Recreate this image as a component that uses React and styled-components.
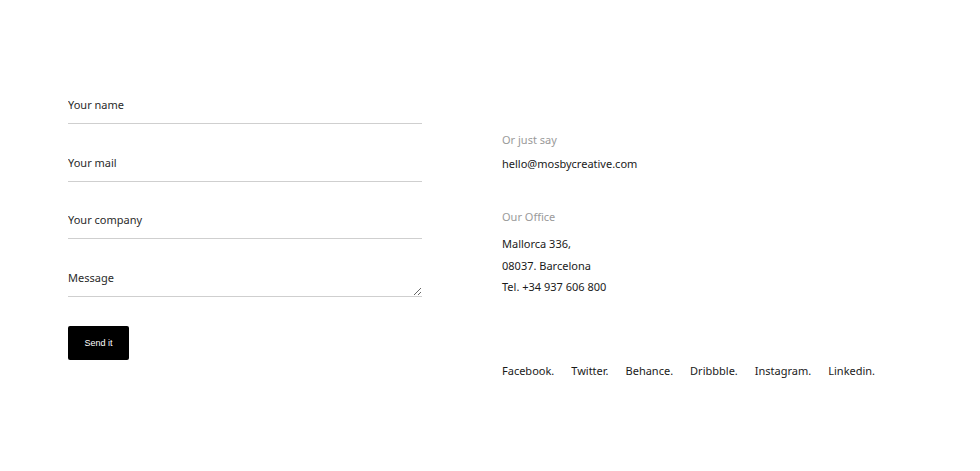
import React from "react";
import styled, { createGlobalStyle } from "styled-components";

const GlobalStyle = createGlobalStyle`
  body {
    margin: 0;
    background: #fff;
    font-family: "Noto Sans", "Open Sans", sans-serif;
    color: #1a1a1a;
  }
`;

const Page = styled.div`
  display: flex;
  gap: 80px;
  padding: 86px 0 0 68px;
  height: 471px;
  box-sizing: border-box;
`;

const Form = styled.form`
  width: 354px;
  display: flex;
  flex-direction: column;
  gap: 19.5px;
`;

const Input = styled.input`
  height: 38px;
  box-sizing: border-box;
  border: none;
  border-bottom: 1px solid #cfcfcf;
  padding: 0;
  font-family: inherit;
  font-size: 11px;
  color: #1a1a1a;
  outline: none;

  &::placeholder {
    color: #2a2a2a;
  }
`;

const TextArea = styled.textarea`
  height: 38px;
  box-sizing: border-box;
  border: none;
  border-bottom: 1px solid #cfcfcf;
  padding: 12px 0 0;
  line-height: 14px;
  font-family: inherit;
  font-size: 11px;
  outline: none;
  resize: vertical;

  &::placeholder {
    color: #2a2a2a;
  }
`;

const Button = styled.button`
  margin-top: 10px;
  align-self: flex-start;
  width: 61px;
  height: 34px;
  border: none;
  border-radius: 2px;
  background: #000;
  color: #fff;
  font-family: "Liberation Sans", Arial, sans-serif;
  font-size: 9px;
  cursor: pointer;
`;

const Info = styled.div`
  display: flex;
  flex-direction: column;
  padding-top: 47px;
`;

const Label = styled.div`
  font-size: 11px;
  line-height: 14px;
  color: #9a9a9a;
  margin-bottom: ${(p) => p.$gap || 10}px;
`;

const Text = styled.div`
  font-size: 11px;
  line-height: 14px;
  color: #1a1a1a;
  margin-bottom: ${(p) => p.$gap || 0}px;
`;

const Socials = styled.div`
  display: flex;
  gap: 17px;
  margin-top: 70px;
`;

const Social = styled.a`
  font-size: 11px;
  line-height: 14px;
  color: #1a1a1a;
  text-decoration: none;
`;

const socials = ["Facebook.", "Twitter.", "Behance.", "Dribbble.", "Instagram.", "Linkedin."];

export default function App() {
  return (
    <>
      <GlobalStyle />
      <Page>
        <Form onSubmit={(e) => e.preventDefault()}>
          <Input placeholder="Your name" />
          <Input placeholder="Your mail" />
          <Input placeholder="Your company" />
          <TextArea placeholder="Message" />
          <Button type="submit">Send it</Button>
        </Form>
        <Info>
          <Label>Or just say</Label>
          <Text $gap={39}>hello@mosbycreative.com</Text>
          <Label $gap={13}>Our Office</Label>
          <Text $gap={7.5}>Mallorca 336,</Text>
          <Text $gap={7.5}>08037. Barcelona</Text>
          <Text>Tel. +34 937 606 800</Text>
          <Socials>
            {socials.map((s) => (
              <Social key={s} href="#">
                {s}
              </Social>
            ))}
          </Socials>
        </Info>
      </Page>
    </>
  );
}
